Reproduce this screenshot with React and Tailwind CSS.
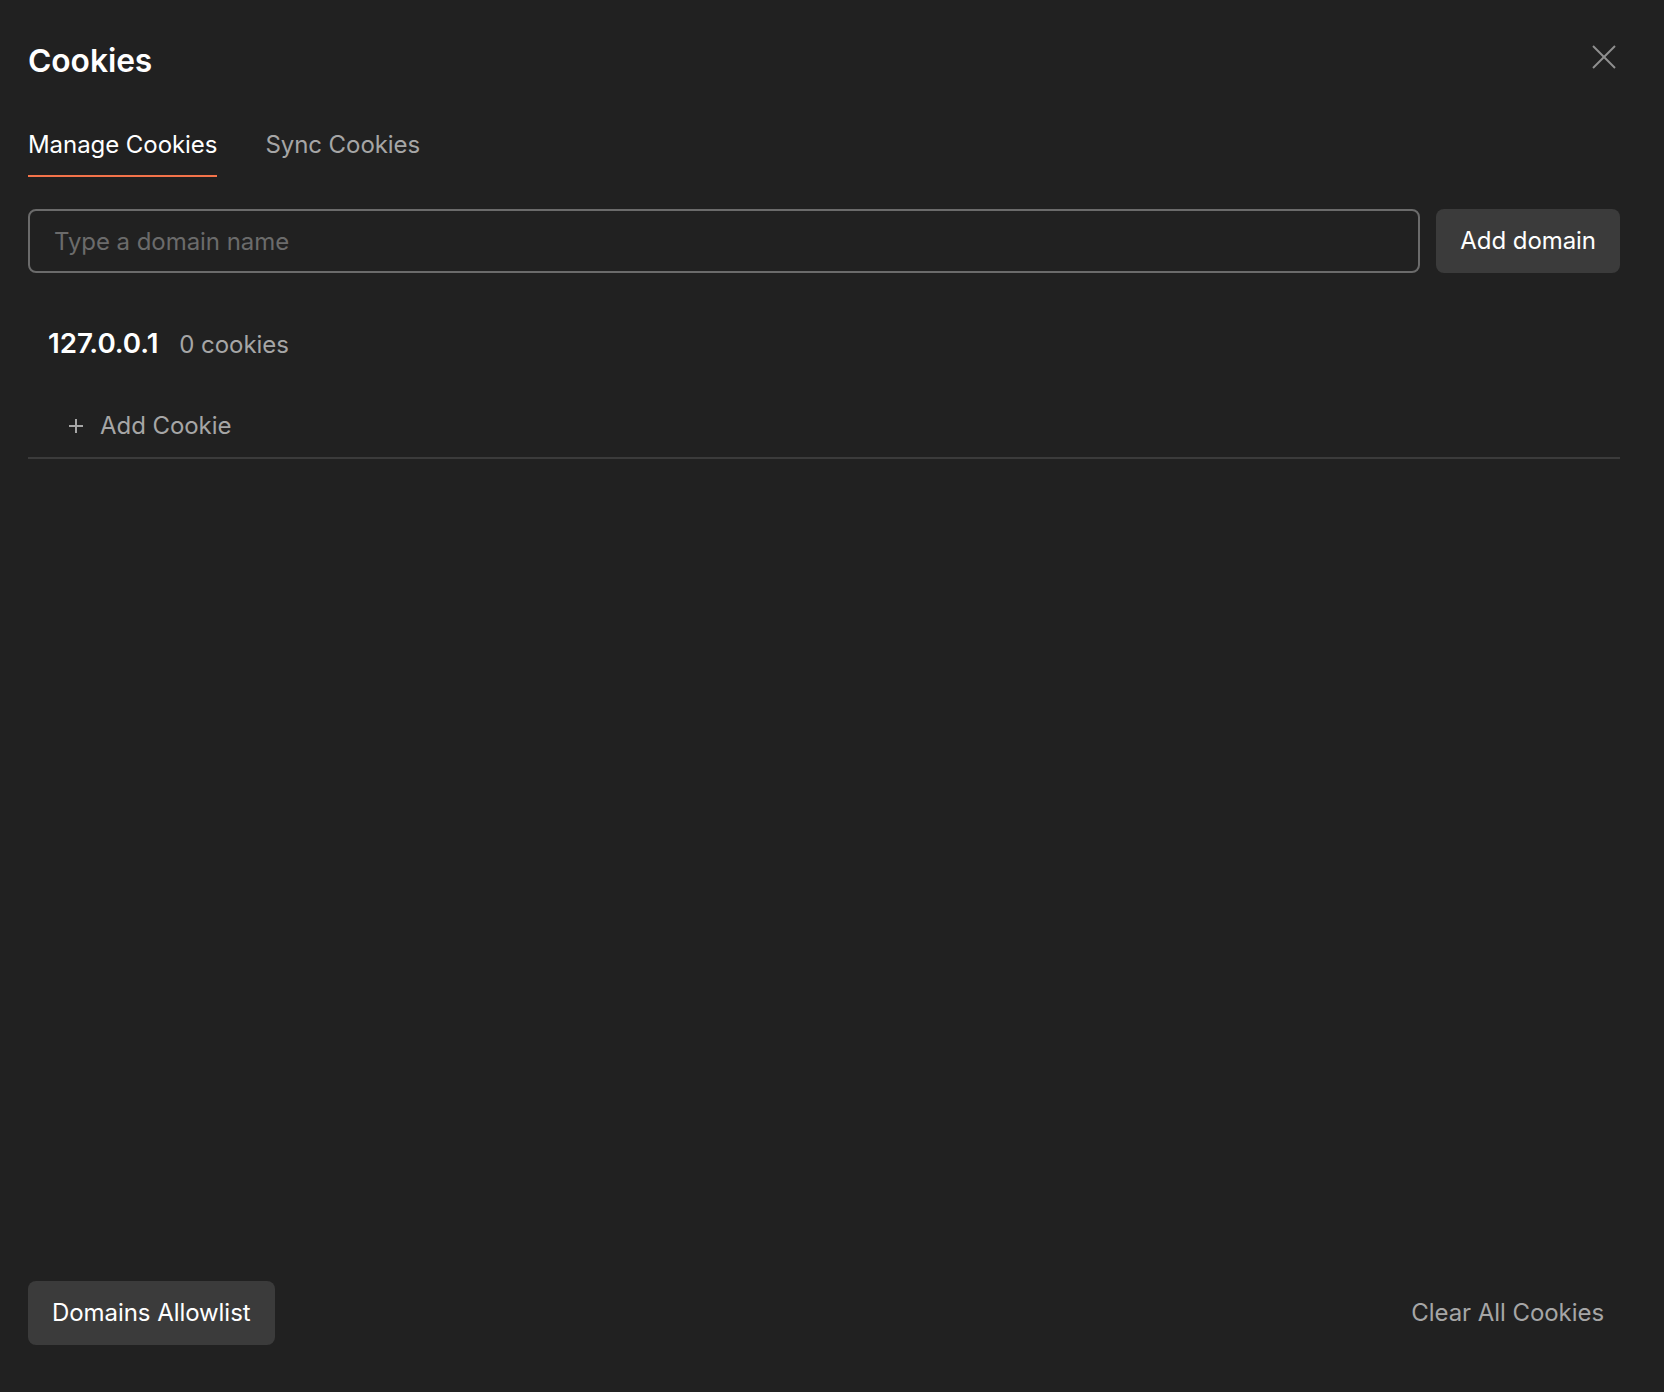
function App() {
  return (
    <div className="flex h-[1392px] w-[1664px] flex-col bg-[#212121] pb-[47px] pl-7 pr-11 font-['Inter',sans-serif] text-[24px] leading-8 tracking-[-0.06px] text-[#a6a6a6]">
      <header className="flex items-start justify-between pt-[43px]">
        <h1 className="text-[31.75px] font-semibold leading-9 text-white">Cookies</h1>
        <button className="mr-1 mt-0.5 text-[#8f8f8f]" type="button" aria-label="Close">
          <svg className="h-6 w-6" viewBox="0 0 24 24" fill="none" stroke="currentColor" strokeWidth="2" aria-hidden="true">
            <path d="M1 1L23 23" />
            <path d="M23 1L1 23" />
          </svg>
        </button>
      </header>

      <nav className="mt-[50px] flex gap-12">
        <span className="border-b-2 border-[#f4734a] pb-3.5 text-white">Manage Cookies</span>
        <span className="pb-3.5">Sync Cookies</span>
      </nav>

      <div className="mt-8 flex gap-4">
        <input
          className="h-16 flex-1 rounded-lg border-2 border-[#6b6b6b] bg-transparent px-6 text-[24px] outline-none placeholder:text-[#6b6b6b]"
          placeholder="Type a domain name"
        />
        <button className="h-16 rounded-lg bg-[#3b3b3b] px-6 text-white" type="button">Add domain</button>
      </div>

      <div className="border-b-2 border-[#3b3b3b] pb-[15px]">
        <div className="mt-[54px] flex items-baseline gap-[21px] px-5">
          <span className="text-[27.75px] font-semibold text-white">127.0.0.1</span>
          <span>0 cookies</span>
        </div>
        <div className="mt-[49px] flex items-center gap-4 px-10">
          <svg className="h-4 w-4" viewBox="0 0 16 16" fill="none" stroke="currentColor" strokeWidth="2" aria-hidden="true">
            <path d="M8 1V15" />
            <path d="M1 8H15" />
          </svg>
          Add Cookie
        </div>
      </div>

      <footer className="mt-auto flex items-center justify-between">
        <button className="h-16 rounded-lg bg-[#3b3b3b] px-6 text-white" type="button">Domains Allowlist</button>
        <button className="px-4" type="button">Clear All Cookies</button>
      </footer>
    </div>
  );
}

export default App;
